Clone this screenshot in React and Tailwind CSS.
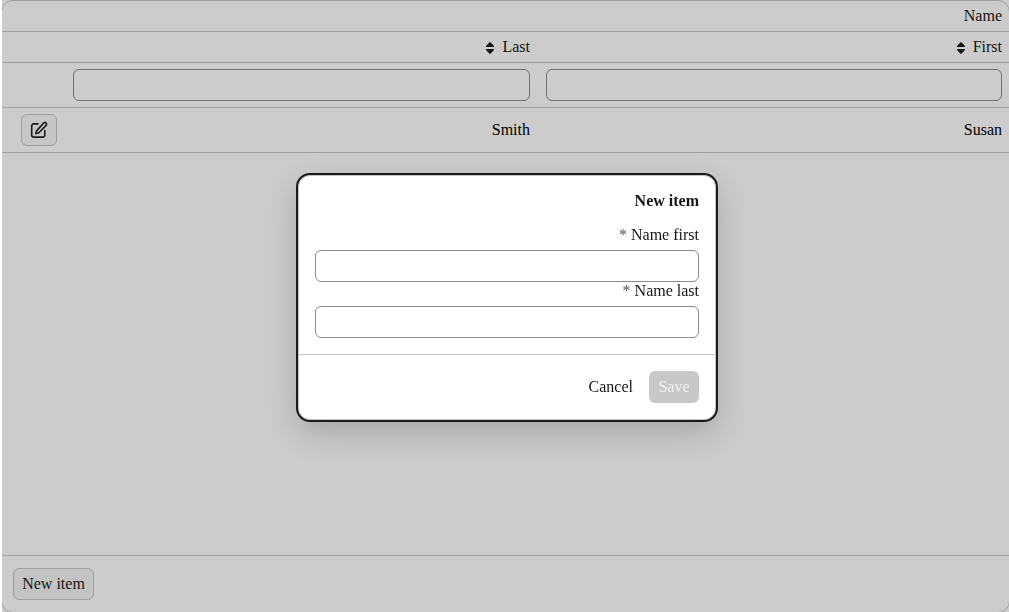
function SortIcon() {
  return (
    <svg className="mr-2 mt-[2px] h-3 w-2" viewBox="0 0 8 12" fill="#161616" aria-hidden="true">
      <path d="M3.3.4Q4-.3 4.7.4L7.8 3.7Q8.4 5 7.2 5H.8Q-.4 5 .2 3.7ZM3.3 11.6Q4 12.3 4.7 11.6L7.8 8.3Q8.4 7 7.2 7H.8Q-.4 7 .2 8.3Z" />
    </svg>
  );
}

function EditIcon() {
  return (
    <svg className="size-5 shrink-0" viewBox="0 0 20 20" fill="none" stroke="#1b1b1b" strokeWidth="1.6" strokeLinecap="round" strokeLinejoin="round" aria-hidden="true">
      <path d="M9 3.9H4.7a2 2 0 0 0-2 2v9.2a2 2 0 0 0 2 2h9.1a2 2 0 0 0 2-2v-4.6" />
      <path d="M14.7 3a1.65 1.65 0 0 1 2.4 2.4l-7 7.1q-.35.35-.85.5l-2.1.6q-.35.1-.25-.25l.6-2.1q.15-.5.5-.85z" />
    </svg>
  );
}

function Field({ label }) {
  return (
    <label className="flex flex-col text-right">
      <span className="h-6 leading-[18px]"><span className="text-[#555]">*</span> {label}</span>
      <input className="h-8 w-full rounded-md border border-[#8c8c8c] bg-white px-2 outline-none" />
    </label>
  );
}

export default function App() {
  return (
    <div className="h-[612px] w-[1009px] overflow-hidden bg-white pl-[2px] font-['Liberation_Serif',serif] text-base text-[#161616]">
      <div className="h-full w-full overflow-hidden bg-[#ccc]">
        <div className="-mx-px flex h-[613px] flex-col rounded-xl border border-[#9f9f9f]">
          <div className="flex h-[31px] items-center justify-end border-b border-[#9f9f9f] pr-[7px]">Name</div>
          <div className="flex h-[31px] items-center border-b border-[#9f9f9f]">
            <div className="flex w-[528px] items-center justify-end"><SortIcon />Last</div>
            <div className="flex flex-1 items-center justify-end pr-[7px]"><SortIcon />First</div>
          </div>
          <div className="flex h-[45px] items-center gap-4 border-b border-[#9f9f9f] pl-[71px] pr-[7px]">
            <input aria-label="Last" className="h-8 w-[457px] rounded-md border border-[#707070] bg-transparent px-2 outline-none" />
            <input aria-label="First" className="h-8 w-[456px] rounded-md border border-[#707070] bg-transparent px-2 outline-none" />
          </div>
          <div className="flex h-[45px] items-center border-b border-[#9f9f9f] pl-[19px] pr-[7px] text-black">
            <button aria-label="Edit" className="flex h-8 w-9 items-center justify-center rounded-md border border-[#9f9f9f] bg-[#c6c6c6]"><EditIcon /></button>
            <div className="w-[473px] text-right">Smith</div>
            <div className="flex-1 text-right">Susan</div>
          </div>
          <div className="flex-1" />
          <div className="flex h-[57px] items-center border-t border-[#9f9f9f] pl-[11px]">
            <button className="h-8 w-[81px] rounded-md border border-[#9f9f9f] bg-[#c3c3c3]">New item</button>
          </div>
        </div>
      </div>

      <div className="fixed inset-0 flex items-start justify-center pl-[5px] pt-[175px]">
        <div role="dialog" className="flex h-[245px] w-[418px] flex-col rounded-xl border border-[#c4c4c4] bg-white shadow-[0_12px_32px_rgba(0,0,0,0.2)] outline-2 outline-[#1b1b1b]">
          <div className="flex h-[178px] flex-col px-4 pt-[13px]">
            <h2 className="h-[37px] text-right font-bold leading-6">New item</h2>
            <Field label="Name first" />
            <Field label="Name last" />
          </div>
          <div className="flex flex-1 items-center justify-end border-t border-[#c4c4c4] px-4">
            <button className="mr-4">Cancel</button>
            <button disabled className="h-8 w-[50px] rounded-md bg-[#c8c8c8] text-[#f0f0f0]">Save</button>
          </div>
        </div>
      </div>
    </div>
  );
}
